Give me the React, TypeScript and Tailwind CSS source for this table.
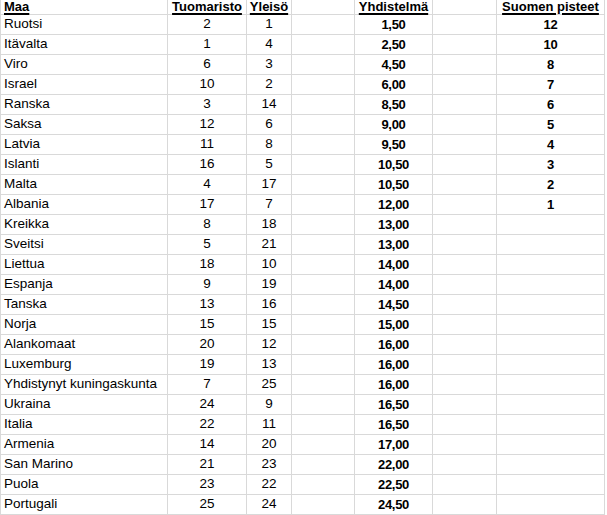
const rows: [string, number, number, string, string][] = [
  ['Ruotsi', 2, 1, '1,50', '12'],
  ['Itävalta', 1, 4, '2,50', '10'],
  ['Viro', 6, 3, '4,50', '8'],
  ['Israel', 10, 2, '6,00', '7'],
  ['Ranska', 3, 14, '8,50', '6'],
  ['Saksa', 12, 6, '9,00', '5'],
  ['Latvia', 11, 8, '9,50', '4'],
  ['Islanti', 16, 5, '10,50', '3'],
  ['Malta', 4, 17, '10,50', '2'],
  ['Albania', 17, 7, '12,00', '1'],
  ['Kreikka', 8, 18, '13,00', ''],
  ['Sveitsi', 5, 21, '13,00', ''],
  ['Liettua', 18, 10, '14,00', ''],
  ['Espanja', 9, 19, '14,00', ''],
  ['Tanska', 13, 16, '14,50', ''],
  ['Norja', 15, 15, '15,00', ''],
  ['Alankomaat', 20, 12, '16,00', ''],
  ['Luxemburg', 19, 13, '16,00', ''],
  ['Yhdistynyt kuningaskunta', 7, 25, '16,00', ''],
  ['Ukraina', 24, 9, '16,50', ''],
  ['Italia', 22, 11, '16,50', ''],
  ['Armenia', 14, 20, '17,00', ''],
  ['San Marino', 21, 23, '22,00', ''],
  ['Puola', 23, 22, '22,50', ''],
  ['Portugali', 25, 24, '24,50', ''],
];

const cols = 'grid grid-cols-[168px_79px_45px_63px_78px_64px_108px]';
const cell = 'border-r border-b border-[#d9d9d9] h-[20px] flex items-center overflow-hidden whitespace-nowrap';
const bold = 'font-bold text-[13px] tracking-[-0.3px]';

function Head({ children, left }: { children?: string; left?: boolean }) {
  return (
    <div
      className={`border-r border-b border-[#d9d9d9] h-[15px] pb-[1px] flex items-end whitespace-nowrap font-bold underline underline-offset-[2px] decoration-[1.5px] text-[13px] leading-[13px] ${left ? 'border-l pl-[3px]' : 'justify-center'}`}
    >
      {children}
    </div>
  );
}

export default function App() {
  return (
    <div className="w-[607px] h-[515px] overflow-hidden bg-white text-black font-['Liberation_Sans',Arial,sans-serif] text-[13.5px]">
      <div className={cols}>
        <Head left>Maa</Head>
        <Head>Tuomaristo</Head>
        <Head>Yleisö</Head>
        <Head />
        <Head>Yhdistelmä</Head>
        <Head />
        <Head>Suomen pisteet</Head>

        {rows.map(([maa, t, y, yh, p]) => (
          <div key={maa} className="contents">
            <div className={`${cell} border-l pl-[3px]`}>{maa}</div>
            <div className={`${cell} justify-center`}>{t}</div>
            <div className={`${cell} justify-center`}>{y}</div>
            <div className={cell} />
            <div className={`${cell} justify-center ${bold}`}>{yh}</div>
            <div className={cell} />
            <div className={`${cell} justify-center ${bold}`}>{p}</div>
          </div>
        ))}
      </div>
    </div>
  );
}
